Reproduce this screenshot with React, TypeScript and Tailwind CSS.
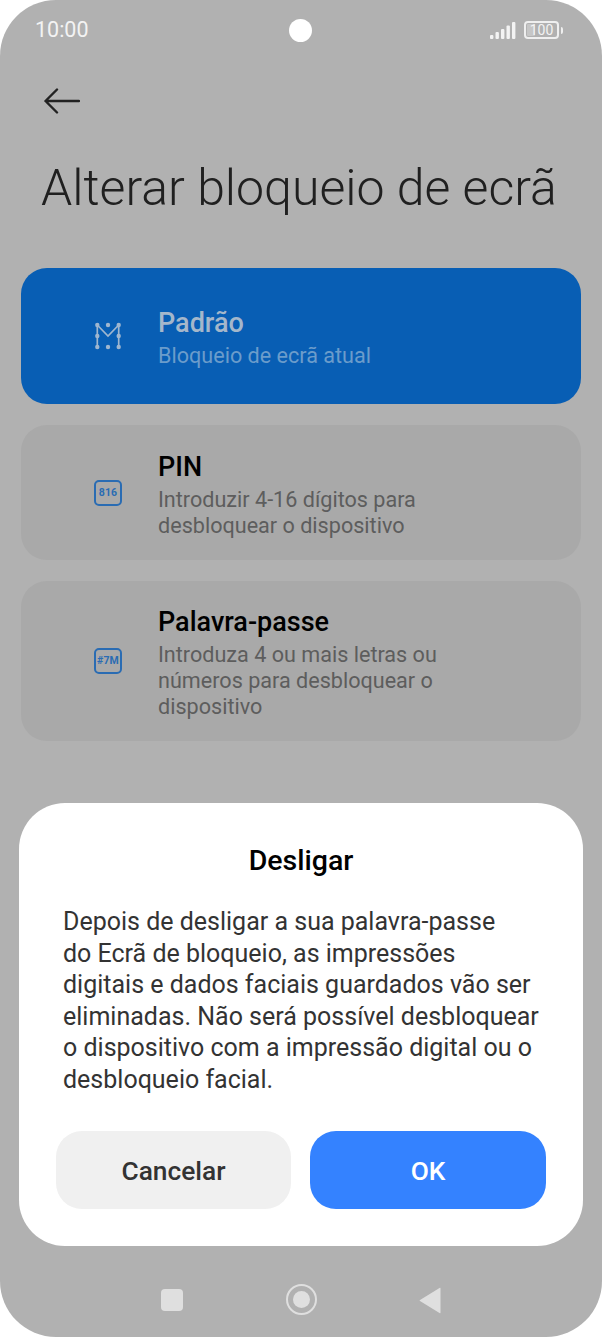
const font = "font-['Roboto',sans-serif]"

function PatternIcon() {
  return (
    <svg width="28" height="28" viewBox="0 0 28 28" fill="none" className="text-[#9fb6cf]">
      <path d="M3.3 3V25M3.3 3L14 14L24.7 3V25" stroke="currentColor" strokeWidth="1.7" />
      {[
        [3.3, 3],
        [14, 3],
        [24.7, 3],
        [3.3, 14],
        [24.7, 14],
        [3.3, 25],
        [14, 25],
        [24.7, 25],
      ].map(([cx, cy]) => (
        <circle key={`${cx}-${cy}`} cx={cx} cy={cy} r="2.2" fill="currentColor" />
      ))}
    </svg>
  )
}

function BoxIcon({ label }: { label: string }) {
  return (
    <div className="flex h-[26px] w-[28px] items-center justify-center rounded-[5px] border-2 border-[#2a6cb3] text-[10.5px] font-bold tracking-[0.2px] text-[#2a6cb3]">
      {label}
    </div>
  )
}

function OptionCard({
  icon,
  title,
  lines,
  active,
  className,
}: {
  icon: React.ReactNode
  title: string
  lines: string[]
  active?: boolean
  className: string
}) {
  return (
    <div className={`flex items-center rounded-[26px] ${active ? "bg-[#085eb4]" : "bg-[#a9a9a9]"} ${className}`}>
      <div className="w-[137px] shrink-0 pl-[73px]">{icon}</div>
      <div className="pt-[2px]">
        <div className={`mb-[2px] text-[27px] font-medium leading-[36px] ${active ? "text-[#a4b7cb]" : "text-black"}`}>
          {title}
        </div>
        <div className={`text-[21.6px] leading-[26px] ${active ? "text-[#6b9ccb]" : "text-[#5d5d5d]"}`}>
          {lines.map((line) => (
            <div key={line}>{line}</div>
          ))}
        </div>
      </div>
    </div>
  )
}

export default function App() {
  return (
    <div className={`relative h-[1337px] w-[602px] overflow-hidden bg-white ${font}`}>
      <div className="flex h-full flex-col rounded-[56px] bg-[#b1b1b1]">
        {/* Status bar */}
        <div className="relative flex h-[60px] shrink-0 items-center justify-between pl-[35px] pr-[39px]">
          <span className="text-[21.5px] text-[#f3f3f3]">10:00</span>
          <div className="absolute left-[289px] top-[19px] h-[23px] w-[23px] rounded-full bg-white" />
          <div className="flex items-center gap-[8px]">
            <svg width="26" height="17" viewBox="0 0 26 17" fill="#f3f3f3">
              <rect x="0" y="13" width="3.4" height="4" rx="1" />
              <rect x="5.5" y="10" width="3.4" height="7" rx="1" />
              <rect x="11" y="7" width="3.4" height="10" rx="1" />
              <rect x="16.5" y="3.5" width="3.4" height="13.5" rx="1" />
              <rect x="22" y="0" width="3.4" height="17" rx="1" />
            </svg>
            <div className="flex items-center gap-[2px]">
              <div className="relative flex h-[18px] w-[35px] items-center justify-center rounded-[4px] border-2 border-[#efefef] text-[14px] leading-none text-[#f3f3f3]">
                <div className="absolute inset-y-[1px] left-[1px] w-[8px] rounded-[1px] bg-[#c6c6c6]" />
                <span className="relative">100</span>
              </div>
              <div className="h-[7px] w-[2px] rounded-r-sm bg-[#efefef]" />
            </div>
          </div>
        </div>

        {/* Back arrow */}
        <div className="h-[60px] shrink-0 pl-[44px] pt-[28px]">
          <svg width="36" height="26" viewBox="0 0 36 26" fill="none" stroke="#222" strokeWidth="2.4" strokeLinecap="round" strokeLinejoin="round">
            <path d="M1.5 13H35M13 1.5L1.5 13L13 24.5" />
          </svg>
        </div>

        <h1 className="mt-[40px] pl-[41px] text-[50px] font-light leading-[56px] text-[#202020]">
          Alterar bloqueio de ecrã
        </h1>

        {/* Options */}
        <div className="mt-[52px] flex flex-col gap-[21px] px-[21px]">
          <OptionCard active className="h-[136px]" icon={<PatternIcon />} title="Padrão" lines={["Bloqueio de ecrã atual"]} />
          <OptionCard className="h-[135px]" icon={<BoxIcon label="816" />} title="PIN" lines={["Introduzir 4-16 dígitos para", "desbloquear o dispositivo"]} />
          <OptionCard className="h-[160px]" icon={<BoxIcon label="#7M" />} title="Palavra-passe" lines={["Introduza 4 ou mais letras ou", "números para desbloquear o", "dispositivo"]} />
        </div>

        {/* Navigation bar */}
        <div className="mt-auto flex h-[48px] shrink-0 items-start">
          <div className="ml-[161px] h-[22px] w-[22px] rounded-[4px] bg-[#dfdfdf]" />
          <div className="ml-[103px] -mt-[5px] flex h-[31px] w-[31px] items-center justify-center rounded-full border-2 border-[#dfdfdf]">
            <div className="h-[17px] w-[17px] rounded-full bg-[#dfdfdf]" />
          </div>
          <svg width="22" height="27" viewBox="0 0 22 27" className="ml-[102px] -mt-[2px]" fill="#dfdfdf">
            <path d="M21.5 1.5V25.5Q21.5 26.5 20.5 26L1 14Q0 13.5 1 13L20.5 1Q21.5 .5 21.5 1.5Z" />
          </svg>
        </div>
      </div>

      {/* Dialog */}
      <div className="absolute left-[19px] top-[803px] flex h-[443px] w-[564px] flex-col rounded-[46px] bg-white px-[37px]">
        <h2 className="mt-[41px] text-center text-[28.5px] font-medium leading-[34px] text-black">Desligar</h2>
        <p className="-mr-[4px] mt-[28px] pl-[7px] text-[25px] leading-[31.5px] text-[#333]">
          Depois de desligar a sua palavra-passe
          <br />
          do Ecrã de bloqueio, as impressões
          <br />
          digitais e dados faciais guardados vão ser
          <br />
          eliminadas. Não será possível desbloquear
          <br />
          o dispositivo com a impressão digital ou o
          <br />
          desbloqueio facial.
        </p>
        <div className="mt-[36px] flex gap-[19px]">
          <button className="flex h-[78px] w-[235px] items-center justify-center rounded-[26px] bg-[#f0f0f0] pt-[3px] text-[26.3px] font-medium text-[#333]">
            Cancelar
          </button>
          <button className="flex h-[78px] flex-1 items-center justify-center rounded-[26px] bg-[#3482ff] pt-[3px] text-[26.3px] font-medium text-white">
            OK
          </button>
        </div>
      </div>
    </div>
  )
}
